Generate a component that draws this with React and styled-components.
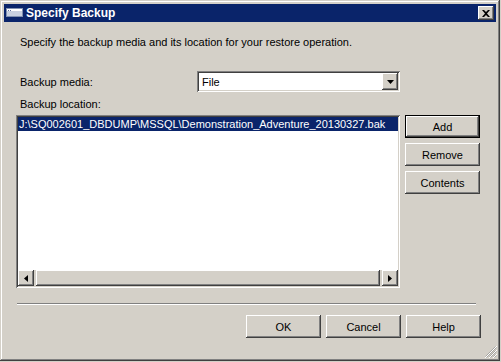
import React from "react";
import styled, { createGlobalStyle, css } from "styled-components";

const raised = css`
  box-shadow: inset -1px -1px #404040, inset 1px 1px #ffffff,
    inset -2px -2px #808080, inset 2px 2px #d4d0c8;
`;

const sunken = css`
  box-shadow: inset 1px 1px #808080, inset -1px -1px #ffffff,
    inset 2px 2px #404040, inset -2px -2px #d4d0c8;
`;

const Global = createGlobalStyle`
  html, body {
    margin: 0;
    padding: 0;
    background: #d4d0c8;
    font-family: "Liberation Sans", Arial, sans-serif;
    font-size: 11px;
    color: #000;
  }
`;

const Window = styled.div`
  position: relative;
  width: 500px;
  height: 361px;
  box-sizing: border-box;
  padding: 4px;
  background: #d4d0c8;
  display: flex;
  flex-direction: column;
  box-shadow: inset -1px -1px #404040, inset 1px 1px #d4d0c8,
    inset -2px -2px #808080, inset 2px 2px #ffffff;
`;

const TitleBar = styled.div`
  height: 18px;
  background: #0a246a;
  display: flex;
  align-items: center;
  padding: 0 2px 0 2px;
  color: #fff;
`;

const TitleText = styled.span`
  font-weight: bold;
  font-size: 12px;
  margin-left: 2px;
  flex: 1;
`;

const CloseButton = styled.div`
  width: 16px;
  height: 14px;
  background: #d4d0c8;
  display: flex;
  align-items: center;
  justify-content: center;
  ${raised}
`;

const Body = styled.div`
  flex: 1;
  display: flex;
  flex-direction: column;
  padding: 13px 15px 0 12px;
`;

const Text = styled.div`
  line-height: 14px;
  padding-left: 4px;
  margin-top: ${(p) => p.$top || 0}px;
`;

const MediaRow = styled.div`
  display: flex;
  align-items: center;
  margin-top: 22px;
`;

const MediaLabel = styled.div`
  width: 181px;
  padding-left: 4px;
  box-sizing: border-box;
`;

const Combo = styled.div`
  width: 203px;
  height: 21px;
  box-sizing: border-box;
  background: #fff;
  display: flex;
  align-items: center;
  padding: 2px 2px 2px 5px;
  ${sunken}
`;

const ComboValue = styled.span`
  flex: 1;
`;

const ArrowButton = styled.div`
  width: ${(p) => p.$w || 16}px;
  height: ${(p) => p.$h || 16}px;
  flex: none;
  background: #d4d0c8;
  display: flex;
  align-items: center;
  justify-content: center;
  box-sizing: border-box;
  ${raised}
`;

const MainRow = styled.div`
  display: flex;
  gap: 5px;
  margin-top: 4px;
`;

const ListBox = styled.div`
  width: 384px;
  height: 173px;
  box-sizing: border-box;
  padding: 2px;
  background: #fff;
  display: flex;
  flex-direction: column;
  ${sunken}
`;

const ListItems = styled.div`
  flex: 1;
  overflow: hidden;
`;

const ListItem = styled.div`
  height: 14px;
  line-height: 14px;
  padding-left: 1px;
  white-space: nowrap;
  background: ${(p) => (p.$selected ? "#0a246a" : "transparent")};
  color: ${(p) => (p.$selected ? "#fff" : "#000")};
`;

const HScroll = styled.div`
  height: 16px;
  display: flex;
  background: #d4d0c8;
`;

const Thumb = styled.div`
  flex: 1;
  margin: 0 2px;
  background: #d4d0c8;
  ${raised}
`;

const SideButtons = styled.div`
  display: flex;
  flex-direction: column;
  gap: 5px;
`;

const Button = styled.div`
  width: 75px;
  height: 23px;
  box-sizing: border-box;
  background: #d4d0c8;
  display: flex;
  align-items: center;
  justify-content: center;
  ${(p) =>
    p.$default
      ? css`
          border: 1px solid #000;
          box-shadow: inset -1px -1px #404040, inset 1px 1px #ffffff,
            inset -2px -2px #808080, inset 2px 2px #d4d0c8;
        `
      : raised}
`;

const Separator = styled.div`
  height: 1px;
  width: 459px;
  margin: 15px 0 0 1px;
  background: #808080;
  border-bottom: 1px solid #fff;
`;

const Footer = styled.div`
  display: flex;
  justify-content: flex-end;
  gap: 5px;
  margin-top: 10px;
`;

const Grip = styled.svg`
  position: absolute;
  right: 3px;
  bottom: 3px;
`;

const WindowIcon = () => (
  <svg width="18" height="10" viewBox="0 0 18 10">
    <rect x="0.5" y="0.5" width="16" height="8" fill="#c8d0e0" stroke="#8090b0" />
    <rect x="1" y="1" width="15" height="2" fill="#ffffff" />
    <rect x="2" y="2" width="1" height="1" fill="#6070a0" />
    <rect x="4" y="2" width="1" height="1" fill="#6070a0" />
  </svg>
);

const Triangle = ({ dir }) => {
  const pts = {
    down: "0,0 7,0 3.5,4",
    left: "4,0 4,7 0,3.5",
    right: "0,0 0,7 4,3.5",
  }[dir];
  const w = dir === "down" ? 7 : 4;
  const h = dir === "down" ? 4 : 7;
  return (
    <svg width={w} height={h} viewBox={`0 0 ${w} ${h}`}>
      <polygon points={pts} fill="#000" />
    </svg>
  );
};

export default function App() {
  return (
    <>
      <Global />
      <Window>
        <TitleBar>
          <WindowIcon />
          <TitleText>Specify Backup</TitleText>
          <CloseButton>
            <svg width="8" height="7" viewBox="0 0 8 7">
              <path d="M0 0 L2 0 L4 2 L6 0 L8 0 L5 3.5 L8 7 L6 7 L4 5 L2 7 L0 7 L3 3.5 Z" fill="#000" />
            </svg>
          </CloseButton>
        </TitleBar>
        <Body>
          <Text>Specify the backup media and its location for your restore operation.</Text>
          <MediaRow>
            <MediaLabel>Backup media:</MediaLabel>
            <Combo>
              <ComboValue>File</ComboValue>
              <ArrowButton $w={16} $h={17}>
                <Triangle dir="down" />
              </ArrowButton>
            </Combo>
          </MediaRow>
          <Text $top={5}>Backup location:</Text>
          <MainRow>
            <ListBox>
              <ListItems>
                <ListItem $selected>
                  J:\SQ002601_DBDUMP\MSSQL\Demonstration_Adventure_20130327.bak
                </ListItem>
              </ListItems>
              <HScroll>
                <ArrowButton>
                  <Triangle dir="left" />
                </ArrowButton>
                <Thumb />
                <ArrowButton>
                  <Triangle dir="right" />
                </ArrowButton>
              </HScroll>
            </ListBox>
            <SideButtons>
              <Button $default>Add</Button>
              <Button>Remove</Button>
              <Button>Contents</Button>
            </SideButtons>
          </MainRow>
          <Separator />
          <Footer>
            <Button>OK</Button>
            <Button>Cancel</Button>
            <Button>Help</Button>
          </Footer>
        </Body>
        <Grip width="12" height="12" viewBox="0 0 12 12">
          <path d="M11 1 L1 11 M11 5 L5 11 M11 9 L9 11" stroke="#808080" strokeWidth="1.5" />
          <path d="M12 0 L0 12 M12 4 L4 12 M12 8 L8 12" stroke="#ffffff" strokeWidth="1" />
        </Grip>
      </Window>
    </>
  );
}
